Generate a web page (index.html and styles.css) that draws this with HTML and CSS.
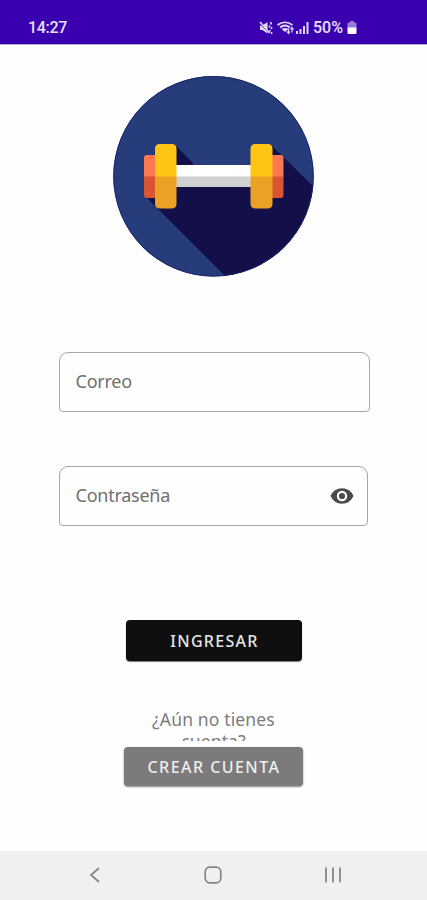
FILE: index.html
```
<!DOCTYPE html>
<html lang="es">
<head>
<meta charset="utf-8">
<title>Ingresar</title>
<link rel="stylesheet" href="styles.css">
</head>
<body>
<div class="screen">
  <header class="status">
    <span class="time">14:27</span>
    <svg class="status-icons" width="52" height="16" viewBox="0 0 52 16" fill="none" stroke="#e3d8fa">
      <path d="M1 5.500h2.500L8.500 2v11.500L3.500 10H1z" fill="#e3d8fa" stroke="none"/>
      <path d="M.5 3.500l9 9" stroke="#3a00b0" stroke-width="1"/>
      <path d="M1 2l9.500 11M12 2v2.500M10.500 5.500v2M12.500 7v2M11 10v1.500M12.500 12v2" stroke-width="1.600"/>
      <path d="M18.500 5q7.500-5.500 15 0M21 7.500q5-4 10 0" stroke-width="1.700"/>
      <path d="M22.500 9q3.500-2 7 0L26 12z" fill="#e3d8fa" stroke="none"/>
      <path d="M29.500 8.500v5M28 11.500l1.500 2 1.500-2M33 12.500v-5M31.500 9.500l1.500-2 1.500 2" stroke-width="1.200"/>
      <path d="M38 11v3M41.500 9v5M45 6v8M48.500 2v12" stroke-width="2"/>
    </svg>
    <span class="percent">50%</span>
    <svg class="battery" width="10" height="14" viewBox="0 0 10 14">
      <path d="M3 0h4v1.500h1.500q1 0 1 1V7h-9V2.500q0-1 1-1H3z" fill="#9a7bd8"/>
      <path d="M.5 6.500h9V12q0 1-1 1h-7q-1 0-1-1z" fill="#fff"/>
    </svg>
  </header>
  <main class="content">
    <svg class="logo" width="201" height="201" viewBox="0 0 201 201">
      <defs><clipPath id="disc"><circle cx="100.500" cy="100.300" r="100.200"/></clipPath></defs>
      <circle cx="100.500" cy="100.300" r="100.200" fill="#263c7b"/>
      <g clip-path="url(#disc)" fill="#120f49">
        <path d="M62 69L80 87V111H138V69L158 69L201 111V201H113L33 121L62 105z"/>
      </g>
      <circle cx="100.500" cy="100.300" r="99.800" fill="none" stroke="#19266d"/>
      <path d="M34 79h9v22H31V82q0-3 3-3zM158 79h9.500q3 0 3 3v19H158z" fill="#fb7850"/>
      <path d="M31 100.500h12V122h-9q-3 0-3-3zM158 100.500h12.500V119q0 3-3 3H158z" fill="#d95533"/>
      <path d="M63 89h76v12H63z" fill="#fff"/>
      <path d="M63 100.500h76V111H63z" fill="#d0d0d2"/>
      <path d="M42 101V73q0-5 5-5h11.500q5 0 5 5v28zM137.500 101V73q0-5 5-5h12q5 0 5 5v28z" fill="#ffc515"/>
      <path d="M42 100.500h21.500V127.500q0 5-5 5H47q-5 0-5-5zM137.500 100.500h22V127.500q0 5-5 5h-12q-5 0-5-5z" fill="#eba126"/>
    </svg>
    <div class="field email"><span>Correo</span></div>
    <div class="field password">
      <span>Contraseña</span>
      <svg width="24" height="18" viewBox="0 0 24 18">
        <path d="M.500 9Q4 1.300 12 1.300T23.500 9Q20 16.700 12 16.700T.500 9z" fill="#4b4b4b"/>
        <circle cx="12" cy="9" r="5.200" fill="#fff"/>
        <circle cx="12" cy="9" r="3.100" fill="#4b4b4b"/>
      </svg>
    </div>
    <div class="button enter"><span>INGRESAR</span></div>
    <p class="question">¿Aún no tienes<br>cuenta?</p>
    <div class="button create"><span>CREAR CUENTA</span></div>
  </main>
  <nav class="nav">
    <svg width="12" height="18" viewBox="0 0 12 18"><path d="M10 2L2 9l8 7" fill="none" stroke="#858585" stroke-width="1.700"/></svg>
    <svg width="18" height="18" viewBox="0 0 18 18"><rect x="1.200" y="1.200" width="15.600" height="15.600" rx="4.500" fill="none" stroke="#858585" stroke-width="1.700"/></svg>
    <svg width="18" height="18" viewBox="0 0 18 18"><path d="M2 1.500v15M9 1.500v15M16 1.500v15" stroke="#929292" stroke-width="2"/></svg>
  </nav>
</div>
</body>
</html>
```
FILE: styles.css
```
* { box-sizing: border-box; }
body { margin: 0; background: #fefefe; font-family: "Noto Sans", sans-serif; }
.screen { width: 427px; height: 900px; display: flex; flex-direction: column; overflow: hidden; }
.status {
  height: 44px; flex: none; display: flex; align-items: center;
  padding: 13px 70px 0 28px; background: #3a00b0; border-bottom: 1px solid #2c00a0;
  color: #e9e0fb; font-family: Roboto, sans-serif; font-size: 16px; line-height: 20px;
  box-shadow: 0 1px 0 #b4a4e0;
}
.time { font-weight: 500; letter-spacing: -.3px; }
.status-icons { margin-left: auto; }
.percent { margin-left: 2px; font-weight: 500; letter-spacing: 0; width: 34px; }
.content { flex: 1; display: flex; flex-direction: column; align-items: center; }
.logo { margin-top: 32px; flex: none; }
.field {
  height: 60px; flex: none; align-self: flex-start; margin-left: 58.500px;
  display: flex; align-items: center; justify-content: space-between;
  border: 1px solid #a7a7a7; border-radius: 9px 9px 4px 4px;
  padding: 0 13px 0 16px; color: #707070; font-size: 18px; line-height: 24px;
  letter-spacing: -.25px;
}
.field span { padding-bottom: 2px; }
.email { width: 311px; margin-top: 75px; }
.password { width: 309px; height: 60px; margin-top: 54px; }
.button {
  flex: none; display: flex; align-items: center; justify-content: center;
  border-radius: 4px; font-size: 16px; line-height: 22px; font-weight: 500;
}
.enter {
  width: 176px; height: 41px; margin-top: 94px; padding-left: 2px;
  background: #0f0f0f; color: #e6e6e6; letter-spacing: 1.300px; box-shadow: 0 1px 1px #777;
}
.question {
  width: 150px; height: 33px; margin: 47px 0 0; overflow: hidden; flex: none;
  text-align: center; color: #7c7c7c; font-size: 17.500px; line-height: 22px; letter-spacing: .15px;
}
.create {
  width: 179px; height: 39px; margin-top: 6px; padding-left: 1px;
  background: #7c7a7b; color: #eee; letter-spacing: 1.450px; box-shadow: 0 1px 2px #888;
}
.nav {
  height: 49px; flex: none; display: flex; align-items: center; justify-content: space-between;
  padding: 0 85px 2px 89px; background: #f0f0f0;
}
```
